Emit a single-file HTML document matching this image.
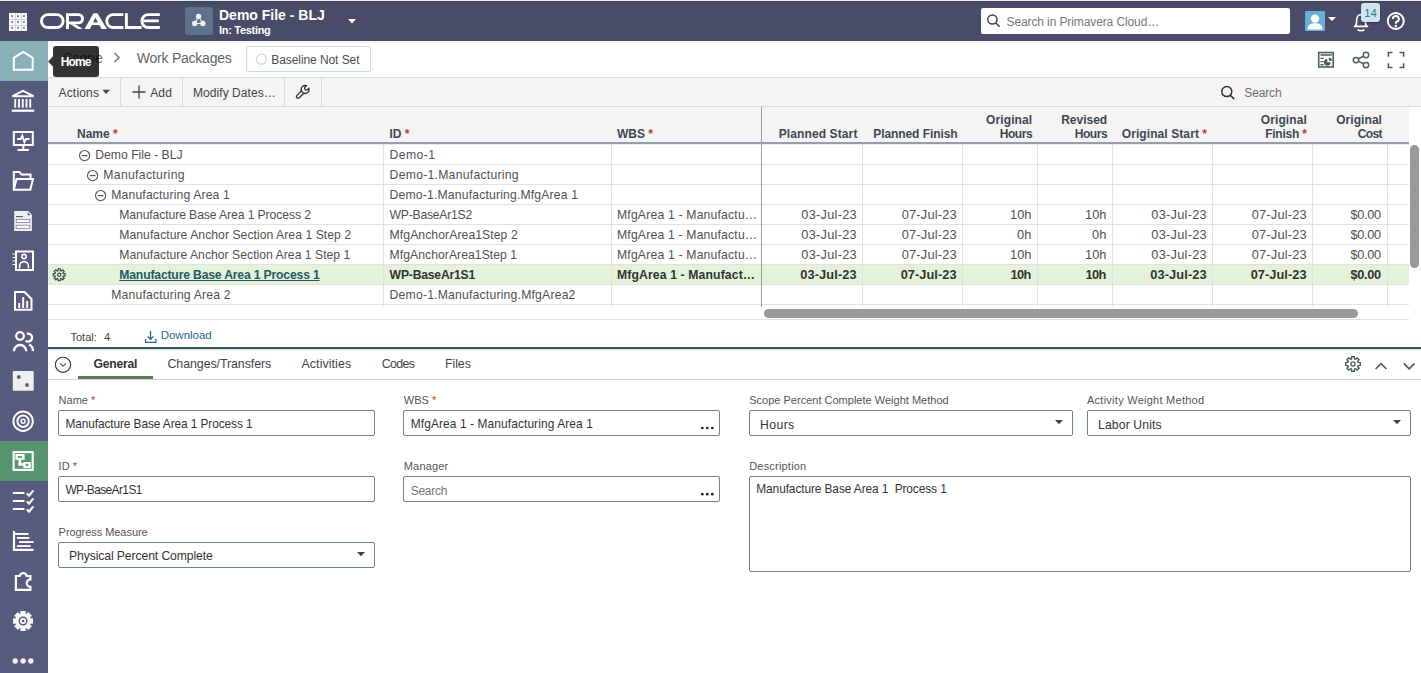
<!DOCTYPE html>
<html><head><meta charset="utf-8"><style>
*{box-sizing:border-box}
html,body{margin:0;padding:0}
body{width:1421px;height:673px;overflow:hidden;position:relative;background:#fff;font-family:"Liberation Sans",sans-serif;color:#333}
.a{position:absolute}
.t{position:absolute;white-space:nowrap;line-height:1}
svg.i{position:absolute;overflow:visible}
</style></head><body>
<div class="a" style="left:0px;top:0px;width:1421px;height:1px;background:#e8e8e6;"></div><div class="a" style="left:0px;top:1px;width:1421px;height:1px;background:#3e4462;"></div><div class="a" style="left:0px;top:2px;width:1421px;height:39px;background:#484c69;"></div><div class="a" style="left:48px;top:41px;width:1373px;height:1px;background:#f7f7f5;"></div><div class="a" style="left:48px;top:42px;width:1373px;height:1px;background:#f3f3f3;"></div><div class="a" style="left:48px;top:43px;width:1373px;height:1px;background:#fafafa;"></div><svg class="i" style="left:0px;top:0px" width="40" height="40" viewBox="0 0 40 40"><rect x="9" y="13" width="18" height="18" fill="#fbfbfc"/><rect x="15" y="13" width="1" height="18" fill="#d3d4dc"/><rect x="9" y="19" width="18" height="1" fill="#d3d4dc"/><rect x="21" y="13" width="1" height="18" fill="#d3d4dc"/><rect x="9" y="25" width="18" height="1" fill="#d3d4dc"/><rect x="11.15" y="15.150000000000002" width="1.9" height="1.9" fill="#80829a"/><rect x="11.15" y="21.05" width="1.9" height="1.9" fill="#80829a"/><rect x="11.15" y="26.95" width="1.9" height="1.9" fill="#80829a"/><rect x="17.05" y="15.150000000000002" width="1.9" height="1.9" fill="#80829a"/><rect x="17.05" y="21.05" width="1.9" height="1.9" fill="#80829a"/><rect x="17.05" y="26.95" width="1.9" height="1.9" fill="#80829a"/><rect x="22.95" y="15.150000000000002" width="1.9" height="1.9" fill="#80829a"/><rect x="22.95" y="21.05" width="1.9" height="1.9" fill="#80829a"/><rect x="22.95" y="26.95" width="1.9" height="1.9" fill="#80829a"/></svg><svg class="i" style="left:0px;top:0px" width="170" height="40" viewBox="0 0 170 40"><rect x="41.45" y="14.65" width="21.7" height="12.9" rx="6.45" stroke="#fff" stroke-width="2.9" fill="none"/><path d="M67.5,29 V14.65 H78.45 A4.1,4.1 0 0 1 78.45,22.85 H68" stroke="#fff" stroke-width="2.9" fill="none"/><path d="M70.3,24.2 H75.3 L82.9,29 H77.8 Z" fill="#fff"/><path d="M84.6,29 L93.4,13.2 H97.4 L107,29 H101.6 L95.4,17.8 L89.9,29 Z" fill="#fff"/><rect x="91" y="22.4" width="9.5" height="2.7" fill="#fff"/><path d="M123.4,14.65 H113.2 A6.45,6.45 0 0 0 113.2,27.55 H123.4" stroke="#fff" stroke-width="2.9" fill="none"/><path d="M126.4,13.2 V27.55 H141.6" stroke="#fff" stroke-width="2.9" fill="none"/><path d="M159.8,14.65 H148.3 A6.45,6.45 0 0 0 148.3,27.55 H159.8 M143.5,20.9 H158.8" stroke="#fff" stroke-width="2.9" fill="none"/></svg><div class="a" style="left:185px;top:7px;width:28px;height:28px;background:#5e7289;border-radius:3px"></div><svg class="i" style="left:0px;top:0px" width="220" height="40" viewBox="0 0 220 40"><path d="M198.6,16.3 L194.7,23.5 L202.9,23.5 Z" stroke="#eef0f2" stroke-width="1.1" fill="none"/><circle cx="198.6" cy="16.3" r="2.65" fill="#f2f3f5"/><circle cx="194.7" cy="23.5" r="2.65" fill="#f2f3f5"/><circle cx="202.9" cy="23.5" r="2.65" fill="#f2f3f5"/></svg><div class="t" style="left:219px;top:8.15px;font-size:14px;color:#fff;font-weight:700;letter-spacing:0.000px;">Demo File - BLJ</div><div class="t" style="left:219px;top:24.89px;font-size:11px;color:#fff;font-weight:700;letter-spacing:-0.300px;">In: Testing</div><svg class="i" style="left:0px;top:0px" width="360" height="40" viewBox="0 0 360 40"><path d="M348,19 H356 L352,23.5 Z" fill="#fff"/></svg><div class="a" style="left:981px;top:8px;width:309px;height:26px;background:#fff;border-radius:2px"></div><svg class="i" style="left:0px;top:0px" width="1010" height="40" viewBox="0 0 1010 40"><circle cx="992.4" cy="19.5" r="4.6" stroke="#444" stroke-width="1.5" fill="none"/><path d="M995.6,22.8 L999.6,26.8" stroke="#444" stroke-width="1.6"/></svg><div class="t" style="left:1006.5px;top:15.54px;font-size:12px;color:#777;font-weight:400;letter-spacing:-0.108px;">Search in Primavera Cloud…</div><div class="a" style="left:1305px;top:11px;width:20px;height:20px;background:#6aaed6;border-radius:1px;overflow:hidden"></div><svg class="i" style="left:0px;top:0px" width="1340" height="40" viewBox="0 0 1340 40"><circle cx="1315" cy="18.6" r="4.2" fill="#fff"/><path d="M1307.5,29.5 C1307.5,24.5 1311,23.2 1315,23.2 C1319,23.2 1322.5,24.5 1322.5,29.5 Z" fill="#fff"/><path d="M1328,17 H1336 L1332,21 Z" fill="#fff"/></svg><svg class="i" style="left:0px;top:0px" width="1421" height="40" viewBox="0 0 1421 40"><path d="M1353.8,26.4 H1368.2 M1355.6,26.4 C1356.6,24.6 1356.7,22.5 1356.7,19.8 A4.3,5.2 0 0 1 1365.3,19.8 C1365.3,22.5 1365.4,24.6 1366.4,26.4" stroke="#fff" stroke-width="1.7" fill="none"/><path d="M1357.6,29.6 A4.2,2.6 0 0 0 1364.4,29.6" stroke="#fff" stroke-width="1.7" fill="none"/></svg><div class="a" style="left:1361px;top:3px;width:19px;height:19px;background:#d2e5ed;border-radius:3px;box-shadow:0 1px 2px rgba(0,0,0,.35)"></div><div class="t" style="left:1364.3px;top:7.83px;font-size:11.3px;color:#1f7a99;font-weight:400;">14</div><svg class="i" style="left:0px;top:0px" width="1421" height="40" viewBox="0 0 1421 40"><circle cx="1395.8" cy="21" r="8" stroke="#fff" stroke-width="1.9" fill="none"/><path d="M1392.9,18.9 A2.95,2.95 0 1 1 1396.7,21.7 C1395.9,22 1395.8,22.5 1395.8,23.7" stroke="#fff" stroke-width="2" fill="none"/><circle cx="1395.8" cy="26.1" r="1.25" fill="#fff"/></svg><div class="a" style="left:0px;top:41px;width:48px;height:632px;background:#575b7e;"></div><div class="a" style="left:0px;top:41px;width:48px;height:40px;background:#89afb7;"></div><div class="a" style="left:0px;top:441px;width:48px;height:40px;background:#569570;"></div><svg class="i" style="left:0px;top:0px" width="48" height="673" viewBox="0 0 48 673"><path d="M13.8,69.7 V57.8 L23.3,52 L32.7,57.8 V69.7 Z" stroke="#fff" stroke-width="2" fill="none"/><path d="M12.5,96.2 L23,90.8 L33.5,96.2 Z" stroke="#fff" stroke-width="2" fill="none" stroke-width="1.8"/><rect x="14.3" y="99" width="1.9" height="8.6" fill="#fff"/><rect x="18.05" y="99" width="1.9" height="8.6" fill="#fff"/><rect x="21.8" y="99" width="1.9" height="8.6" fill="#fff"/><rect x="25.55" y="99" width="1.9" height="8.6" fill="#fff"/><rect x="29.3" y="99" width="1.9" height="8.6" fill="#fff"/><rect x="11.7" y="109.6" width="22.5" height="2.2" fill="#fff"/><rect x="13.8" y="132" width="19" height="13" stroke="#fff" stroke-width="2" fill="none"/><path d="M17,139 H20.8 L22.3,135.6 L24.4,142.2 L25.9,139 H29.6" stroke="#fff" stroke-width="1.8" fill="none" stroke-linejoin="miter"/><path d="M23.3,146 V150 M17.6,150 H29" stroke="#fff" stroke-width="2" fill="none"/><path d="M13.8,189.8 V172 H19.5 L21.5,174.5 H30.5 V178" stroke="#fff" stroke-width="2" fill="none"/><path d="M13.8,189.8 L16.5,179 H33 L30.3,189.8 Z" stroke="#fff" stroke-width="2" fill="none"/><path d="M14.2,211 H28.2 L31.9,214.7 V231 H14.2 Z" fill="#efeef0"/><path d="M27.6,212.2 L30.7,215.3 H27.6 Z" fill="#575b7e"/><rect x="16" y="216" width="6.9" height="1.1" fill="#575b7e"/><rect x="16.2" y="219.4" width="13.6" height="3.2" fill="#fff" stroke="#8d8ea3" stroke-width="0.9"/><rect x="16.2" y="225.2" width="13.6" height="3.2" fill="#fff" stroke="#8d8ea3" stroke-width="0.9"/><rect x="16" y="251.5" width="17" height="18.5" stroke="#fff" stroke-width="2" fill="none"/><path d="M12.5,254 H15.5 M12.5,257.5 H15.5 M12.5,261 H15.5 M12.5,264.5 H15.5" stroke="#fff" stroke-width="1.2"/><circle cx="24" cy="256.6" r="2.2" stroke="#fff" stroke-width="1.6" fill="none"/><path d="M19.6,268.5 V266 A4.4,4.4 0 0 1 28.4,266 V268.5" stroke="#fff" stroke-width="1.6" fill="none"/><path d="M15,292 H24.5 L31.5,299 V309.7 H15 Z" stroke="#fff" stroke-width="2" fill="none"/><rect x="18.2" y="303" width="2" height="5" fill="#fff"/><rect x="22.2" y="297" width="2" height="11" fill="#fff"/><rect x="26.2" y="301" width="2" height="7" fill="#fff"/><circle cx="20" cy="336" r="3.8" stroke="#fff" stroke-width="2.3" fill="none"/><path d="M26.8,333.8 A4,4 0 1 1 25.6,340.7" stroke="#fff" stroke-width="2.3" fill="none"/><path d="M13.9,351.2 A6.2,6.2 0 0 1 26.3,351.2" stroke="#fff" stroke-width="2.3" fill="none"/><path d="M29.2,344.4 A7,7 0 0 1 32.9,351.2" stroke="#fff" stroke-width="2.3" fill="none"/><rect x="12.8" y="371" width="20.9" height="19.7" rx="1" fill="#f0efed"/><circle cx="18.8" cy="377" r="1.9" fill="#575b7e"/><circle cx="27" cy="385" r="1.9" fill="#575b7e"/><circle cx="23.1" cy="421.2" r="9.7" stroke="#fff" stroke-width="2" fill="none"/><circle cx="23.1" cy="421.2" r="5.7" stroke="#fff" stroke-width="2" fill="none"/><circle cx="23.1" cy="421.2" r="2" stroke="#fff" stroke-width="1.5" fill="none"/><rect x="13.6" y="452.1" width="19.1" height="17.8" stroke="#fff" stroke-width="2.1" fill="none"/><rect x="15.4" y="454" width="9.2" height="5.9" fill="#fff"/><rect x="17.9" y="456.1" width="4.1" height="1.7" fill="#569570"/><rect x="18.5" y="459.5" width="2.7" height="6.1" fill="#fff"/><rect x="18.5" y="463.1" width="5.2" height="2.5" fill="#fff"/><rect x="23.3" y="462" width="7.5" height="6.1" fill="#fff"/><rect x="25.6" y="463.8" width="2.7" height="2.1" fill="#569570"/><rect x="12.75" y="492" width="11.65" height="2" fill="#fff"/><path d="M26.8,493.3 L29.1,495.7 L33.4,490.4" stroke="#f7f3ec" stroke-width="2.2" fill="none"/><rect x="12.75" y="500" width="11.65" height="2" fill="#fff"/><path d="M26.8,501.3 L29.1,503.7 L33.4,498.4" stroke="#f7f3ec" stroke-width="2.2" fill="none"/><rect x="12.75" y="508" width="11.65" height="2" fill="#fff"/><path d="M26.8,509.3 L29.1,511.7 L33.4,506.4" stroke="#f7f3ec" stroke-width="2.2" fill="none"/><path d="M14,531 V549.95 H33.6" stroke="#fff" stroke-width="2.2" fill="none"/><rect x="15" y="533" width="13.5" height="1.9" fill="#fff"/><rect x="16.9" y="537" width="12.5" height="1.9" fill="#fff"/><rect x="19" y="541.1" width="14.6" height="1.9" fill="#fff"/><rect x="16.9" y="545.1" width="13.6" height="1.9" fill="#fff"/><path d="M15.9,589.9 V576 H19.8 A3.45,3.45 0 0 1 26.6,576 H30.4 V579.4 A3.7,3.7 0 0 0 30.4,586.8 V589.9 Z" stroke="#fff" stroke-width="2.2" fill="none"/><polygon points="20.37,613.89 20.40,611.05 25.70,611.05 25.73,613.89 26.19,614.08 28.22,612.09 31.96,615.83 29.97,617.86 30.16,618.32 33.00,618.35 33.00,623.65 30.16,623.68 29.97,624.14 31.96,626.17 28.22,629.91 26.19,627.92 25.73,628.11 25.70,630.95 20.40,630.95 20.37,628.11 19.91,627.92 17.88,629.91 14.14,626.17 16.13,624.14 15.94,623.68 13.10,623.65 13.10,618.35 15.94,618.32 16.13,617.86 14.14,615.83 17.88,612.09 19.91,614.08" fill="#f7f6f4"/><circle cx="23.05" cy="621" r="4.5" fill="#575b7e"/><circle cx="23.05" cy="621" r="2.2" stroke="#fff" stroke-width="1.7" fill="none"/><circle cx="15.2" cy="661" r="2.7" fill="#f2f2f2"/><circle cx="23.1" cy="661" r="2.7" fill="#f2f2f2"/><circle cx="30.8" cy="661" r="2.7" fill="#f2f2f2"/></svg><div class="a" style="left:48px;top:77px;width:1373px;height:30px;background:#f5f4f2;border-top:1px solid #dddbd7;border-bottom:1px solid #dddbd7"></div><div class="a" style="left:120px;top:78px;width:1px;height:28px;background:#dddbd7;"></div><div class="a" style="left:182px;top:78px;width:1px;height:28px;background:#dddbd7;"></div><div class="a" style="left:284px;top:78px;width:1px;height:28px;background:#dddbd7;"></div><div class="a" style="left:321px;top:78px;width:1px;height:28px;background:#dddbd7;"></div><div class="t" style="left:58.5px;top:86.84px;font-size:12px;color:#3a4545;font-weight:400;letter-spacing:0.183px;">Actions</div><svg class="i" style="left:0px;top:0px" width="120" height="100" viewBox="0 0 120 100"><path d="M102.3,89.8 H110 L106.15,94 Z" fill="#3e4e4e"/></svg><svg class="i" style="left:0px;top:0px" width="150" height="100" viewBox="0 0 150 100"><path d="M132.5,92 H145.5 M139,85.5 V98.5" stroke="#444" stroke-width="1.3"/></svg><div class="t" style="left:150.2px;top:86.84px;font-size:12px;color:#3a4545;font-weight:400;letter-spacing:0.150px;">Add</div><div class="t" style="left:193px;top:86.84px;font-size:12px;color:#3a4545;font-weight:400;letter-spacing:0.058px;">Modify Dates…</div><svg class="i" style="left:0px;top:0px" width="320" height="100" viewBox="0 0 320 100"><rect x="295.6" y="92.9" width="9" height="3.3" rx="1.65" transform="rotate(-45 300.1 94.55)" stroke="#333" stroke-width="1.3" fill="#f5f4f2"/><circle cx="305.1" cy="89.5" r="3.9" stroke="#333" stroke-width="1.5" fill="#f5f4f2"/><path d="M305.3,89.3 L309.5,85.1" stroke="#f5f4f2" stroke-width="2.2"/><path d="M306.6,86.2 A1.9,1.9 0 1 0 308.4,88" stroke="#333" stroke-width="1.3" fill="none"/></svg><svg class="i" style="left:0px;top:0px" width="1421" height="110" viewBox="0 0 1421 110"><circle cx="1226.8" cy="91.6" r="5" stroke="#333" stroke-width="1.5" fill="none"/><path d="M1230.3,95.2 L1234.2,99.1" stroke="#333" stroke-width="1.6"/></svg><div class="t" style="left:1244.3px;top:86.84px;font-size:12px;color:#6e6e6e;font-weight:400;letter-spacing:-0.140px;">Search</div><div class="a" style="left:48px;top:107px;width:1361px;height:35px;background:#f5f4f2;"></div><div class="a" style="left:48px;top:142px;width:1361px;height:2px;background:#959eaa;"></div><div class="a" style="left:48px;top:144px;width:1361px;height:1px;background:#ececec;"></div><div class="t" style="left:77px;top:127.84px;font-size:12px;color:#3d4756;font-weight:700;">Name<span style="color:#c2402c">&nbsp;*</span></div><div class="t" style="left:389.5px;top:127.84px;font-size:12px;color:#3d4756;font-weight:700;">ID<span style="color:#c2402c">&nbsp;*</span></div><div class="t" style="left:617px;top:127.84px;font-size:12px;color:#3d4756;font-weight:700;">WBS<span style="color:#c2402c">&nbsp;*</span></div><div class="t" style="right:563.5px;top:127.84px;font-size:12px;color:#3d4756;font-weight:700;"><span style="letter-spacing:0.108px">Planned Start</span></div><div class="t" style="right:463.5px;top:127.84px;font-size:12px;color:#3d4756;font-weight:700;"><span style="letter-spacing:-0.077px">Planned Finish</span></div><div class="t" style="right:388.79999999999995px;top:114.04px;font-size:12px;color:#3d4756;font-weight:700;"><span style="letter-spacing:0.100px">Original</span></div><div class="t" style="right:388.79999999999995px;top:127.84px;font-size:12px;color:#3d4756;font-weight:700;"><span style="letter-spacing:-0.425px">Hours</span></div><div class="t" style="right:313.79999999999995px;top:114.04px;font-size:12px;color:#3d4756;font-weight:700;">Revised</div><div class="t" style="right:313.79999999999995px;top:127.84px;font-size:12px;color:#3d4756;font-weight:700;"><span style="letter-spacing:-0.425px">Hours</span></div><div class="t" style="right:214px;top:127.84px;font-size:12px;color:#3d4756;font-weight:700;"><span style="letter-spacing:0.085px">Original Start</span><span style="color:#c2402c">&nbsp;*</span></div><div class="t" style="right:114px;top:114.04px;font-size:12px;color:#3d4756;font-weight:700;"><span style="letter-spacing:0.114px">Original</span></div><div class="t" style="right:114px;top:127.84px;font-size:12px;color:#3d4756;font-weight:700;"><span style="letter-spacing:-0.260px">Finish</span><span style="color:#c2402c">&nbsp;*</span></div><div class="t" style="right:39px;top:114.04px;font-size:12px;color:#3d4756;font-weight:700;"><span style="letter-spacing:0.057px">Original</span></div><div class="t" style="right:39px;top:127.84px;font-size:12px;color:#3d4756;font-weight:700;"><span style="letter-spacing:-0.600px">Cost</span></div><div class="a" style="left:1409px;top:107px;width:12px;height:37px;background:#fff;"></div><div class="a" style="left:48px;top:265px;width:1361px;height:19px;background:#e4f2dc;"></div><div class="a" style="left:48px;top:164px;width:1361px;height:1px;background:#e1e1e1;"></div><div class="a" style="left:48px;top:184px;width:1361px;height:1px;background:#e1e1e1;"></div><div class="a" style="left:48px;top:204px;width:1361px;height:1px;background:#e1e1e1;"></div><div class="a" style="left:48px;top:224px;width:1361px;height:1px;background:#e1e1e1;"></div><div class="a" style="left:48px;top:244px;width:1361px;height:1px;background:#e1e1e1;"></div><div class="a" style="left:48px;top:264px;width:1361px;height:1px;background:#e1e1e1;"></div><div class="a" style="left:48px;top:284px;width:1361px;height:1px;background:#e1e1e1;"></div><div class="a" style="left:48px;top:304px;width:1361px;height:1px;background:#e1e1e1;"></div><div class="a" style="left:48px;top:319px;width:1361px;height:1px;background:#e1e1e1;"></div><div class="a" style="left:383px;top:144px;width:1px;height:163px;background:#e1e1e1;"></div><div class="a" style="left:611px;top:144px;width:1px;height:163px;background:#e1e1e1;"></div><div class="a" style="left:862px;top:144px;width:1px;height:163px;background:#e1e1e1;"></div><div class="a" style="left:962px;top:144px;width:1px;height:163px;background:#e1e1e1;"></div><div class="a" style="left:1037px;top:144px;width:1px;height:163px;background:#e1e1e1;"></div><div class="a" style="left:1112px;top:144px;width:1px;height:163px;background:#e1e1e1;"></div><div class="a" style="left:1212px;top:144px;width:1px;height:163px;background:#e1e1e1;"></div><div class="a" style="left:1312px;top:144px;width:1px;height:163px;background:#e1e1e1;"></div><div class="a" style="left:1387px;top:144px;width:1px;height:163px;background:#e1e1e1;"></div><div class="a" style="left:761px;top:107px;width:1px;height:200px;background:#979eab;"></div><svg class="i" style="left:0px;top:0px" width="400" height="320" viewBox="0 0 400 320"><circle cx="84.6" cy="155.6" r="5.1" stroke="#555" stroke-width="1.1" fill="none"/><path d="M81.8,155.6 H87.39999999999999" stroke="#555" stroke-width="1.2"/><circle cx="92.6" cy="175.6" r="5.1" stroke="#555" stroke-width="1.1" fill="none"/><path d="M89.8,175.6 H95.39999999999999" stroke="#555" stroke-width="1.2"/><circle cx="100.6" cy="195.6" r="5.1" stroke="#555" stroke-width="1.1" fill="none"/><path d="M97.8,195.6 H103.39999999999999" stroke="#555" stroke-width="1.2"/></svg><div class="t" style="left:95.3px;top:148.67px;font-size:12.2px;color:#515151;font-weight:400;letter-spacing:-0.007px;">Demo File - BLJ</div><div class="t" style="left:389.6px;top:148.67px;font-size:12.2px;color:#515151;font-weight:400;letter-spacing:0.420px;">Demo-1</div><div class="t" style="left:103.3px;top:168.67px;font-size:12.2px;color:#515151;font-weight:400;letter-spacing:0.333px;">Manufacturing</div><div class="t" style="left:389.6px;top:168.67px;font-size:12.2px;color:#515151;font-weight:400;letter-spacing:0.268px;">Demo-1.Manufacturing</div><div class="t" style="left:111.3px;top:188.67px;font-size:12.2px;color:#515151;font-weight:400;letter-spacing:0.142px;">Manufacturing Area 1</div><div class="t" style="left:389.6px;top:188.67px;font-size:12.2px;color:#515151;font-weight:400;letter-spacing:0.169px;">Demo-1.Manufacturing.MfgArea 1</div><div class="t" style="left:119.3px;top:208.67px;font-size:12.2px;color:#515151;font-weight:400;letter-spacing:-0.109px;">Manufacture Base Area 1 Process 2</div><div class="t" style="left:389.6px;top:208.67px;font-size:12.2px;color:#515151;font-weight:400;letter-spacing:-0.245px;">WP-BaseAr1S2</div><div class="t" style="left:119.3px;top:228.67px;font-size:12.2px;color:#515151;font-weight:400;letter-spacing:0.036px;">Manufacture Anchor Section Area 1 Step 2</div><div class="t" style="left:389.6px;top:228.67px;font-size:12.2px;color:#515151;font-weight:400;letter-spacing:0.074px;">MfgAnchorArea1Step 2</div><div class="t" style="left:119.3px;top:248.67px;font-size:12.2px;color:#515151;font-weight:400;letter-spacing:0.018px;">Manufacture Anchor Section Area 1 Step 1</div><div class="t" style="left:389.6px;top:248.67px;font-size:12.2px;color:#515151;font-weight:400;letter-spacing:0.042px;">MfgAnchorArea1Step 1</div><div class="t" style="left:119.3px;top:268.67px;font-size:12.2px;color:#255867;font-weight:700;letter-spacing:-0.178px;text-decoration:underline">Manufacture Base Area 1 Process 1</div><div class="t" style="left:389.6px;top:268.67px;font-size:12.2px;color:#333;font-weight:700;letter-spacing:-0.218px;">WP-BaseAr1S1</div><div class="t" style="left:111.3px;top:288.67px;font-size:12.2px;color:#515151;font-weight:400;letter-spacing:0.174px;">Manufacturing Area 2</div><div class="t" style="left:389.6px;top:288.67px;font-size:12.2px;color:#515151;font-weight:400;letter-spacing:0.200px;">Demo-1.Manufacturing.MfgArea2</div><div class="t" style="left:617px;top:208.67px;font-size:12.2px;color:#515151;font-weight:400;letter-spacing:0.186px;">MfgArea 1 - Manufactu…</div><div class="t" style="right:564.1625px;top:208.86px;font-size:12.8px;color:#515151;font-weight:400;letter-spacing:0.237px;">03-Jul-23</div><div class="t" style="right:464.2125px;top:208.86px;font-size:12.8px;color:#515151;font-weight:400;letter-spacing:0.188px;">07-Jul-23</div><div class="t" style="right:389.5999999999999px;top:208.86px;font-size:12.8px;color:#515151;font-weight:400;letter-spacing:0.000px;">10h</div><div class="t" style="right:314.5999999999999px;top:208.86px;font-size:12.8px;color:#515151;font-weight:400;letter-spacing:0.000px;">10h</div><div class="t" style="right:214.16250000000014px;top:208.86px;font-size:12.8px;color:#515151;font-weight:400;letter-spacing:0.237px;">03-Jul-23</div><div class="t" style="right:114.21250000000009px;top:208.86px;font-size:12.8px;color:#515151;font-weight:400;letter-spacing:0.188px;">07-Jul-23</div><div class="t" style="right:40.40000000000009px;top:208.86px;font-size:12.8px;color:#515151;font-weight:400;letter-spacing:-0.400px;">$0.00</div><div class="t" style="left:617px;top:228.67px;font-size:12.2px;color:#515151;font-weight:400;letter-spacing:0.186px;">MfgArea 1 - Manufactu…</div><div class="t" style="right:564.1625px;top:228.86px;font-size:12.8px;color:#515151;font-weight:400;letter-spacing:0.237px;">03-Jul-23</div><div class="t" style="right:464.2125px;top:228.86px;font-size:12.8px;color:#515151;font-weight:400;letter-spacing:0.188px;">07-Jul-23</div><div class="t" style="right:389.5px;top:228.86px;font-size:12.8px;color:#515151;font-weight:400;letter-spacing:0.100px;">0h</div><div class="t" style="right:314.5px;top:228.86px;font-size:12.8px;color:#515151;font-weight:400;letter-spacing:0.100px;">0h</div><div class="t" style="right:214.16250000000014px;top:228.86px;font-size:12.8px;color:#515151;font-weight:400;letter-spacing:0.237px;">03-Jul-23</div><div class="t" style="right:114.21250000000009px;top:228.86px;font-size:12.8px;color:#515151;font-weight:400;letter-spacing:0.188px;">07-Jul-23</div><div class="t" style="right:40.40000000000009px;top:228.86px;font-size:12.8px;color:#515151;font-weight:400;letter-spacing:-0.400px;">$0.00</div><div class="t" style="left:617px;top:248.67px;font-size:12.2px;color:#515151;font-weight:400;letter-spacing:0.186px;">MfgArea 1 - Manufactu…</div><div class="t" style="right:564.1625px;top:248.86px;font-size:12.8px;color:#515151;font-weight:400;letter-spacing:0.237px;">03-Jul-23</div><div class="t" style="right:464.2125px;top:248.86px;font-size:12.8px;color:#515151;font-weight:400;letter-spacing:0.188px;">07-Jul-23</div><div class="t" style="right:389.5999999999999px;top:248.86px;font-size:12.8px;color:#515151;font-weight:400;letter-spacing:0.000px;">10h</div><div class="t" style="right:314.5999999999999px;top:248.86px;font-size:12.8px;color:#515151;font-weight:400;letter-spacing:0.000px;">10h</div><div class="t" style="right:214.16250000000014px;top:248.86px;font-size:12.8px;color:#515151;font-weight:400;letter-spacing:0.237px;">03-Jul-23</div><div class="t" style="right:114.21250000000009px;top:248.86px;font-size:12.8px;color:#515151;font-weight:400;letter-spacing:0.188px;">07-Jul-23</div><div class="t" style="right:40.40000000000009px;top:248.86px;font-size:12.8px;color:#515151;font-weight:400;letter-spacing:-0.400px;">$0.00</div><div class="t" style="left:617px;top:268.67px;font-size:12.2px;color:#333;font-weight:700;letter-spacing:0.130px;">MfgArea 1 - Manufact…</div><div class="t" style="right:564.3px;top:268.86px;font-size:12.8px;color:#333;font-weight:700;letter-spacing:0.100px;">03-Jul-23</div><div class="t" style="right:464.3375px;top:268.86px;font-size:12.8px;color:#333;font-weight:700;letter-spacing:0.062px;">07-Jul-23</div><div class="t" style="right:390.14999999999986px;top:268.86px;font-size:12.8px;color:#333;font-weight:700;letter-spacing:-0.550px;">10h</div><div class="t" style="right:315.14999999999986px;top:268.86px;font-size:12.8px;color:#333;font-weight:700;letter-spacing:-0.550px;">10h</div><div class="t" style="right:214.30000000000018px;top:268.86px;font-size:12.8px;color:#333;font-weight:700;letter-spacing:0.100px;">03-Jul-23</div><div class="t" style="right:114.33750000000009px;top:268.86px;font-size:12.8px;color:#333;font-weight:700;letter-spacing:0.062px;">07-Jul-23</div><div class="t" style="right:40.40000000000009px;top:268.86px;font-size:12.8px;color:#333;font-weight:700;letter-spacing:-0.400px;">$0.00</div><svg class="i" style="left:0px;top:0px" width="80" height="300" viewBox="0 0 80 300"><polygon points="57.97,270.68 58.11,268.90 60.29,268.90 60.43,270.68 61.24,271.02 62.60,269.85 64.15,271.40 62.98,272.76 63.32,273.57 65.10,273.71 65.10,275.89 63.32,276.03 62.98,276.84 64.15,278.20 62.60,279.75 61.24,278.58 60.43,278.92 60.29,280.70 58.11,280.70 57.97,278.92 57.16,278.58 55.80,279.75 54.25,278.20 55.42,276.84 55.08,276.03 53.30,275.89 53.30,273.71 55.08,273.57 55.42,272.76 54.25,271.40 55.80,269.85 57.16,271.02" stroke="#4a5050" stroke-width="1.3" fill="none"/><circle cx="59.2" cy="274.8" r="1.7" stroke="#4a5050" stroke-width="1.2" fill="none"/></svg><div class="a" style="left:764px;top:309px;width:594px;height:9px;background:#9a9a9a;border-radius:4.5px"></div><div class="a" style="left:1410px;top:145px;width:9px;height:123px;background:#9a9a9a;border-radius:4.5px"></div><div class="t" style="left:70.5px;top:331.69px;font-size:11px;color:#444;font-weight:400;">Total:</div><div class="t" style="left:104px;top:331.93px;font-size:11.3px;color:#444;font-weight:400;">4</div><svg class="i" style="left:0px;top:0px" width="200" height="350" viewBox="0 0 200 350"><path d="M150.5,331 V339.3 M147.6,336.4 L150.5,339.3 L153.4,336.4 M145.6,339 V342.4 H155.9 V339" stroke="#1f6b8a" stroke-width="1.3" fill="none"/></svg><div class="t" style="left:160.7px;top:330.27px;font-size:11.5px;color:#1f6b8a;font-weight:400;letter-spacing:-0.014px;">Download</div><div class="a" style="left:48px;top:347px;width:1373px;height:2px;background:#2e5c68;"></div><div class="a" style="left:48px;top:349px;width:1373px;height:1px;background:#e3dfdc;"></div><div class="a" style="left:48px;top:379px;width:1373px;height:1px;background:#d6d3d0;"></div><svg class="i" style="left:0px;top:0px" width="80" height="380" viewBox="0 0 80 380"><circle cx="63" cy="364.8" r="7.6" stroke="#333" stroke-width="1.1" fill="none"/><path d="M60,363.3 L63,366.1 L66,363.3" stroke="#444" stroke-width="1.05" fill="none"/></svg><div class="t" style="left:93.4px;top:357.97px;font-size:12.2px;color:#333;font-weight:700;letter-spacing:-0.233px;">General</div><div class="a" style="left:78px;top:376px;width:75px;height:3px;background:#5a7d55;"></div><div class="t" style="left:167.5px;top:357.80px;font-size:12.4px;color:#444;font-weight:400;letter-spacing:-0.075px;">Changes/Transfers</div><div class="t" style="left:301.5px;top:357.80px;font-size:12.4px;color:#444;font-weight:400;letter-spacing:0.078px;">Activities</div><div class="t" style="left:381.8px;top:357.80px;font-size:12.4px;color:#444;font-weight:400;letter-spacing:-0.650px;">Codes</div><div class="t" style="left:445.1px;top:357.80px;font-size:12.4px;color:#444;font-weight:400;letter-spacing:-0.100px;">Files</div><svg class="i" style="left:0px;top:0px" width="1421" height="380" viewBox="0 0 1421 380"><polygon points="1351.47,358.93 1351.66,356.72 1354.34,356.72 1354.53,358.93 1355.51,359.33 1357.20,357.90 1359.10,359.80 1357.67,361.49 1358.07,362.47 1360.28,362.66 1360.28,365.34 1358.07,365.53 1357.67,366.51 1359.10,368.20 1357.20,370.10 1355.51,368.67 1354.53,369.07 1354.34,371.28 1351.66,371.28 1351.47,369.07 1350.49,368.67 1348.80,370.10 1346.90,368.20 1348.33,366.51 1347.93,365.53 1345.72,365.34 1345.72,362.66 1347.93,362.47 1348.33,361.49 1346.90,359.80 1348.80,357.90 1350.49,359.33" stroke="#4a5858" stroke-width="1.35" fill="none" stroke-linejoin="miter"/><circle cx="1353" cy="364" r="2.1" stroke="#4a5858" stroke-width="1.3" fill="none"/><path d="M1375.6,369 L1381,363.6 L1386.4,369" stroke="#4e5c5c" stroke-width="1.6" fill="none"/><path d="M1403.8,363.4 L1409.2,368.8 L1414.6,363.4" stroke="#4e5c5c" stroke-width="1.6" fill="none"/></svg><div class="t" style="left:58.6px;top:394.89px;font-size:11px;color:#555;font-weight:400;">Name<span style="color:#c2402c">&nbsp;*</span></div><div class="t" style="left:403.8px;top:394.89px;font-size:11px;color:#555;font-weight:400;">WBS<span style="color:#c2402c">&nbsp;*</span></div><div class="t" style="left:749.2px;top:394.89px;font-size:11px;color:#555;font-weight:400;"><span style="letter-spacing:0.009px">Scope Percent Complete Weight Method</span></div><div class="t" style="left:1087px;top:394.89px;font-size:11px;color:#555;font-weight:400;"><span style="letter-spacing:0.257px">Activity Weight Method</span></div><div class="a" style="left:58px;top:410px;width:317px;height:26px;background:#fff;border:1px solid #6e8383;border-radius:2px"></div><div class="a" style="left:403px;top:410px;width:317px;height:26px;background:#fff;border:1px solid #6e8383;border-radius:2px"></div><div class="a" style="left:749px;top:410px;width:324px;height:26px;background:#fff;border:1px solid #6e8383;border-radius:2px"></div><div class="a" style="left:1087px;top:410px;width:324px;height:26px;background:#fff;border:1px solid #6e8383;border-radius:2px"></div><div class="t" style="left:65.4px;top:418.93px;font-size:11.9px;color:#333;font-weight:400;letter-spacing:-0.100px;">Manufacture Base Area 1 Process 1</div><div class="t" style="left:410.8px;top:418.93px;font-size:11.9px;color:#333;font-weight:400;letter-spacing:0.113px;">MfgArea 1 - Manufacturing Area 1</div><div class="t" style="left:760.1px;top:418.97px;font-size:12.2px;color:#333;font-weight:400;letter-spacing:0.400px;">Hours</div><div class="t" style="left:1098px;top:418.97px;font-size:12.2px;color:#333;font-weight:400;letter-spacing:0.130px;">Labor Units</div><div class="t" style="left:58.6px;top:460.89px;font-size:11px;color:#555;font-weight:400;">ID<span style="color:#c2402c">&nbsp;*</span></div><div class="t" style="left:403.8px;top:460.89px;font-size:11px;color:#555;font-weight:400;"><span style="letter-spacing:0.150px">Manager</span></div><div class="t" style="left:749.2px;top:460.89px;font-size:11px;color:#555;font-weight:400;"><span style="letter-spacing:0.200px">Description</span></div><div class="a" style="left:58px;top:476px;width:317px;height:26px;background:#fff;border:1px solid #6e8383;border-radius:2px"></div><div class="a" style="left:403px;top:476px;width:317px;height:26px;background:#fff;border:1px solid #6e8383;border-radius:2px"></div><div class="a" style="left:749px;top:476px;width:662px;height:96px;background:#fff;border:1px solid #6e8383;border-radius:2px"></div><div class="t" style="left:65.4px;top:484.93px;font-size:11.9px;color:#333;font-weight:400;letter-spacing:-0.573px;">WP-BaseAr1S1</div><div class="t" style="left:410.8px;top:485.14px;font-size:12px;color:#777;font-weight:400;letter-spacing:-0.300px;">Search</div><div class="t" style="left:756.3px;top:484.13px;font-size:11.9px;color:#333;font-weight:400;letter-spacing:-0.097px;">Manufacture Base Area 1&nbsp; Process 1</div><div class="t" style="left:58.6px;top:526.69px;font-size:11px;color:#555;font-weight:400;"><span style="letter-spacing:-0.053px">Progress Measure</span></div><div class="a" style="left:58px;top:542px;width:317px;height:26px;background:#fff;border:1px solid #6e8383;border-radius:2px"></div><div class="t" style="left:69px;top:550.17px;font-size:12.2px;color:#333;font-weight:400;letter-spacing:-0.104px;">Physical Percent Complete</div><svg class="i" style="left:0px;top:0px" width="1421" height="673" viewBox="0 0 1421 673"><circle cx="702.3" cy="428" r="1.35" fill="#222"/><circle cx="707.3" cy="428" r="1.35" fill="#222"/><circle cx="712.3" cy="428" r="1.35" fill="#222"/><circle cx="702.3" cy="494.2" r="1.35" fill="#222"/><circle cx="707.3" cy="494.2" r="1.35" fill="#222"/><circle cx="712.3" cy="494.2" r="1.35" fill="#222"/><path d="M1055,420 H1063 L1059,424.2 Z" fill="#444"/><path d="M1393,420 H1401 L1397,424.2 Z" fill="#444"/><path d="M357,552 H365 L361,556.2 Z" fill="#444"/></svg><div class="t" style="left:63px;top:51.35px;font-size:14px;color:#6a7575;font-weight:400;">Scope</div><svg class="i" style="left:0px;top:0px" width="130" height="80" viewBox="0 0 130 80"><path d="M114.5,53 L119,57.5 L114.5,62" stroke="#758080" stroke-width="1.6" fill="none"/></svg><div class="t" style="left:136.8px;top:51.35px;font-size:14px;color:#5d6868;font-weight:400;letter-spacing:-0.233px;">Work Packages</div><div class="a" style="left:246px;top:46px;width:125px;height:26px;background:#fff;border:1px solid #c9dcdd;border-radius:2px"></div><svg class="i" style="left:0px;top:0px" width="280" height="80" viewBox="0 0 280 80"><circle cx="261.3" cy="59.3" r="5" stroke="#c3d6d8" stroke-width="1.1" fill="none"/></svg><div class="t" style="left:271.3px;top:53.64px;font-size:12px;color:#4d4d4d;font-weight:400;letter-spacing:-0.080px;">Baseline Not Set</div><div class="a" style="left:53px;top:46px;width:46px;height:31px;background:rgba(0,0,0,0.8);border-radius:3px"></div><svg class="i" style="left:0px;top:0px" width="60" height="80" viewBox="0 0 60 80"><path d="M48.2,61.5 L53,56.2 V66.8 Z" fill="rgba(0,0,0,0.8)"/></svg><div class="t" style="left:60.8px;top:55.64px;font-size:12px;color:#fff;font-weight:700;letter-spacing:-0.933px;">Home</div><svg class="i" style="left:0px;top:0px" width="1421" height="80" viewBox="0 0 1421 80"><rect x="1318.7" y="52.55" width="14.5" height="14.45" stroke="#4e5e5e" stroke-width="1.6" fill="none"/><rect x="1320.3" y="54.2" width="11.6" height="1.5" rx="0.7" fill="#4e5e5e"/><rect x="1320.3" y="57.8" width="3.5" height="1.3" rx="0.6" fill="#4e5e5e"/><rect x="1320.3" y="61" width="3.5" height="1.3" rx="0.6" fill="#4e5e5e"/><rect x="1320.3" y="64.1" width="3.5" height="1.3" rx="0.6" fill="#4e5e5e"/><path d="M1327.3,58.9 A3.4,3.4 0 1 0 1330.7,62.3 H1327.3 Z" fill="#4e5e5e"/><path d="M1328.8,57.6 A3.1,3.1 0 0 1 1331.9,60.7 H1328.8 Z" fill="#4e5e5e"/><circle cx="1356" cy="60.1" r="2.7" stroke="#4e5e5e" stroke-width="1.5" fill="none"/><circle cx="1366" cy="55" r="2.7" stroke="#4e5e5e" stroke-width="1.5" fill="none"/><circle cx="1366" cy="65.1" r="2.7" stroke="#4e5e5e" stroke-width="1.5" fill="none"/><path d="M1358.4,58.8 L1363.6,56.3 M1358.4,61.4 L1363.6,63.8" stroke="#4e5e5e" stroke-width="1.5"/><path d="M1388.4,56.8 V52.5 H1392.5 M1399.5,52.5 H1403.6 V56.8 M1403.6,63.3 V67.5 H1399.5 M1392.5,67.5 H1388.4 V63.3" stroke="#4e5e5e" stroke-width="1.6" fill="none"/></svg>
</body></html>
